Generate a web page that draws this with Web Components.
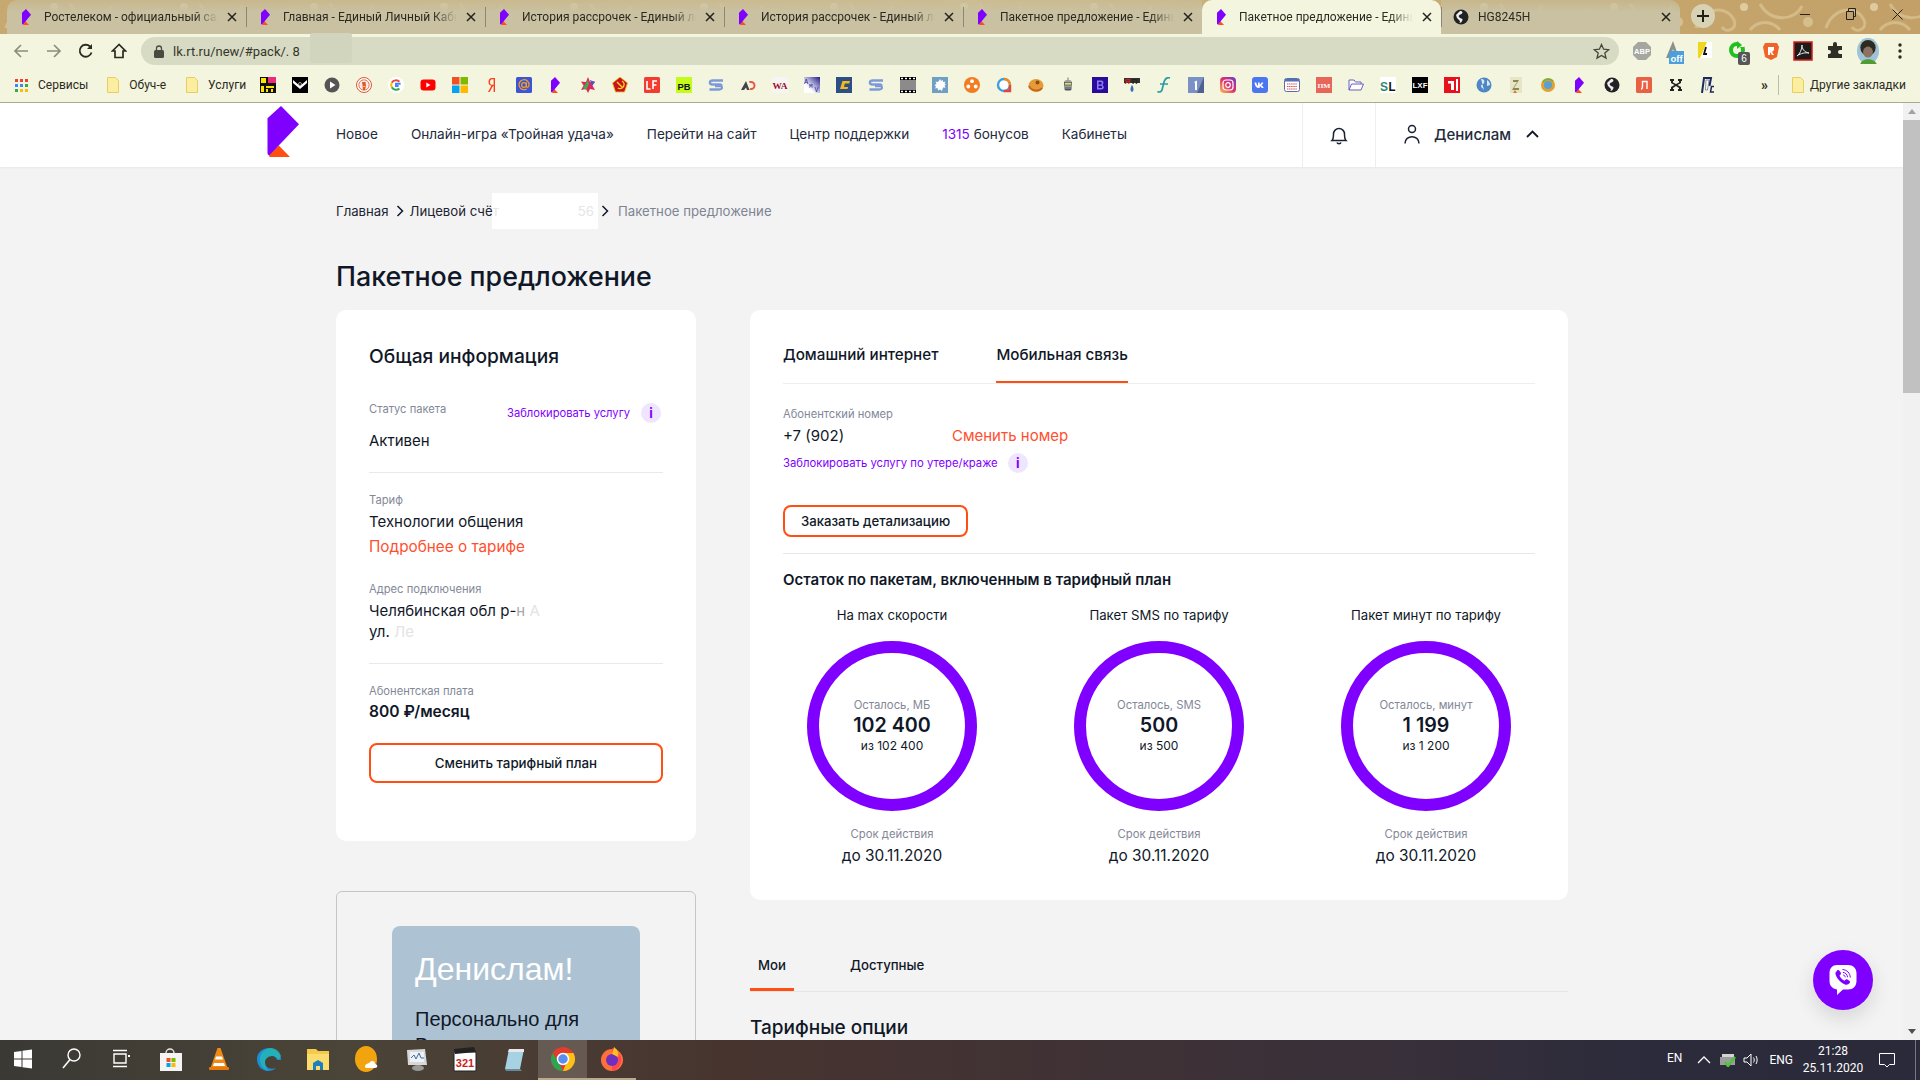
<!DOCTYPE html>
<html lang="ru">
<head>
<meta charset="utf-8">
<title>Пакетное предложение</title>
<style>
  html, body { margin: 0; height: 100%; overflow: hidden; }
  body { display: flex; flex-direction: column; width: 1920px; height: 1080px; background: #f3f3f3; color: #101828; font-family: Inter, "Liberation Sans", sans-serif; }
</style>
</head>
<body>
  <browser-tabs></browser-tabs>
  <browser-toolbar></browser-toolbar>
  <bookmark-bar></bookmark-bar>
  <page-viewport>
    <site-header></site-header>
    <bread-crumbs></bread-crumbs>
    <page-title>Пакетное предложение</page-title>
    <two-columns>
      <div slot="left">
        <general-card></general-card>
        <promo-box name="Денислам!">Персонально для<br>Вас</promo-box>
      </div>
      <div slot="right">
        <mobile-card></mobile-card>
        <options-section></options-section>
      </div>
    </two-columns>
  </page-viewport>
  <task-bar></task-bar>

<script>
const LOGO = `<polygon fill="#ff4f12" points="11.8,39.5 23,51 2.6,51 1.5,48"/><path fill="#7f00ff" d="M14 0 32 18.3 2.4 49.2C1 49 .5 48 .5 47V12.2Z"/>`;
const t = (x, y, size, fill, str, extra = '') => `<text x="${x}" y="${y}" font-size="${size}" fill="${fill}" font-family="Liberation Sans, sans-serif" font-weight="700" ${extra}>${str}</text>`;

const FAVICONS = {
  dfm: `<rect width="16" height="16" fill="#111"/><rect x="8" width="8" height="6" fill="#ee2a7b"/><path d="M1 1h5v5H1zM1 9h3v6H1zM6 9h8v2H6zM6 12h2v3H6zM11 12h2v3h-2z" fill="#ffe600"/>`,
  env: `<rect width="16" height="16" fill="#000"/><path d="M1 3l7 6 7-6v3L8 12 1 6z" fill="#fff"/><circle cx="8" cy="7" r="1.5" fill="#000" stroke="#fff" stroke-width=".6"/>`,
  play: `<circle cx="8" cy="8" r="7.5" fill="#555"/><path d="M6 4.5 11.5 8 6 11.5z" fill="#fff"/>`,
  duck: `<circle cx="8" cy="8" r="7.5" fill="#fff" stroke="#de5833" stroke-width="1"/><circle cx="8" cy="8" r="5.2" fill="#fbe9e4" stroke="#de5833" stroke-width=".8"/><path d="M6 5h3.5l.5 4-1 4H7L6.5 8z" fill="#de5833"/><path d="M7 9h3l-1 1H7z" fill="#fdd20a"/>`,
  google: `<circle cx="8" cy="8" r="8" fill="#fff"/><path d="M12.6 6.8H8v2.2h2.6" fill="none" stroke="#4285f4" stroke-width="2"/><path d="M11.4 4.7A5 5 0 0 0 3.8 5.6" fill="none" stroke="#ea4335" stroke-width="2"/><path d="M3.8 5.6a5 5 0 0 0 0 4.8" fill="none" stroke="#fbbc05" stroke-width="2"/><path d="M3.8 10.4a5 5 0 0 0 7.6 1" fill="none" stroke="#34a853" stroke-width="2"/>`,
  yt: `<rect y="2.5" width="15" height="11" rx="3" x=".5" fill="#f00"/><path d="M6.3 5.5 10.5 8l-4.2 2.5z" fill="#fff"/>`,
  ms: `<rect width="7.5" height="7.5" fill="#f25022"/><rect x="8.5" width="7.5" height="7.5" fill="#7fba00"/><rect y="8.5" width="7.5" height="7.5" fill="#00a4ef"/><rect x="8.5" y="8.5" width="7.5" height="7.5" fill="#ffb900"/>`,
  ya: `<path d="M11 1H8C5.5 1 4.5 3 4.5 5S5.5 8.4 7.4 8.8L4 15h1.6L9 9h.6v6H11zM9.6 2.2v5.6H8.3C6.9 7.8 6 7 6 5s.9-2.8 2.3-2.8z" fill="#fc3f1d"/>`,
  mail: `<rect width="16" height="16" rx="1.5" fill="#3c55d8"/><circle cx="8" cy="8" r="2.4" fill="none" stroke="#f7a11a" stroke-width="1.2"/><path d="M10.4 5.6v3.6c0 1.6 2.6 1.6 2.6-1.2A5 5 0 1 0 10.6 12" fill="none" stroke="#f7a11a" stroke-width="1.2"/>`,
  star: `<path d="M8 0l2 5 5-.5-2.6 4L15 13l-5-1-2 4-2-4-5 1 2.6-4.5L1 4.5 6 5z" fill="#e0245e"/><path d="M8 3l1 4-3 6-3-2z" fill="#35b34a"/><path d="M10 3l5 2-3 4z" fill="#5a4fcf"/>`,
  soviet: `<path d="M8 0l7.5 6-3 9h-9L.5 6z" fill="#c8131d" stroke="#e7c51c" stroke-width=".8"/><path d="M5 5l6 6M10 4a4 4 0 0 1-4 7" fill="none" stroke="#ffd920" stroke-width="1.4"/>`,
  lf: `<rect width="16" height="16" rx="1.5" fill="#f33c2f"/><path d="M3 4v8h3.5M9 12V4h4M9 8h3.4" fill="none" stroke="#fff" stroke-width="1.6"/>`,
  pb: `<rect width="16" height="16" fill="#c5fa1c"/>` + t(1.4, 12.5, 9.5, '#111', 'PB', 'textLength="13" lengthAdjust="spacingAndGlyphs"'),
  s: `<path d="M15 3.5H5C1 3.5 1 7 4 7.5h8c2 0 2 1.5 0 1.5H7M1.5 12.5H11c3.6 0 3.6-2.4 2-3.3" fill="none" stroke="#7d9ad8" stroke-width="2.3"/>`,
  ad: `<path d="M1 13 6 4l3.5 9H7L6 10.5 4 13z" fill="#444"/><path d="M9 4h2a4.5 4.5 0 0 1 0 9h-1.5l.8-2H11a2.5 2.5 0 0 0 0-5H9.6z" fill="#e8574a"/>`,
  wa: `<rect width="16" height="16" fill="#f7f4f4"/><text x=".4" y="11.5" font-size="8" fill="#9b0d18" font-family="Liberation Serif" font-weight="700" textLength="15" lengthAdjust="spacingAndGlyphs">WA</text>`,
  amv: `<defs><linearGradient id="amvg" x1="1" y1="0" x2="0" y2="1"><stop offset="0" stop-color="#221a8c"/><stop offset=".7" stop-color="#fff"/></linearGradient></defs><rect width="16" height="16" fill="url(#amvg)"/><text x="0" y="7" font-size="7" fill="#1a1a9c" font-family="Liberation Mono">A</text><text x="5" y="10.5" font-size="6" fill="#1a1a9c" font-family="Liberation Mono">M</text><text x="10.5" y="15" font-size="6.5" fill="#1a1a9c" font-family="Liberation Mono">V</text>`,
  c: `<rect width="16" height="16" fill="#2c4f86"/><path d="M14 4H6.5L4 12h7.5l.7-2H8l.8-3.6h4.4z" fill="#f7b81d"/>`,
  film: `<rect width="16" height="16" fill="#000"/><rect y="3" width="16" height="10" fill="#8b8b8b"/><path d="M1 .8h2v1.4H1zM5 .8h2v1.4H5zM9 .8h2v1.4H9zM13 .8h2v1.4h-2zM1 13.8h2v1.4H1zM5 13.8h2v1.4H5zM9 13.8h2v1.4H9zM13 13.8h2v1.4h-2z" fill="#fff"/>`,
  splash: `<rect width="16" height="16" fill="#6f9fc4"/><path d="M8 2l1 2 2-1 0 2 2.5-.3-1 2 1.500 1-1.500 1 1 2-2.500-.300L10 14l-2-1.500L6 13.500 5.500 11 3 11.500 4 9.500 2.500 8 4.500 7 3.500 4.500 6 5z" fill="#fff"/>`,
  reel: `<circle cx="8" cy="8" r="8" fill="#f47c20"/><circle cx="8" cy="4.2" r="1.9" fill="#fff"/><circle cx="4.3" cy="9.5" r="1.9" fill="#fff"/><circle cx="11.7" cy="9.5" r="1.9" fill="#fff"/>`,
  ring: `<circle cx="8" cy="8" r="6" fill="#fff" stroke="#3aa0dc" stroke-width="2.4"/><path d="M8 2a6 6 0 0 1 6 6" fill="none" stroke="#f48a1c" stroke-width="2.4"/><path d="M14 8v6H8" fill="none" stroke="#e8443a" stroke-width="2.4"/>`,
  donut: `<ellipse cx="8" cy="8.5" rx="7.5" ry="6.5" fill="#e79a38"/><circle cx="9.5" cy="5.5" r="2" fill="#8e4c10"/><path d="M1 9c2 5 10 6 13 2" fill="none" stroke="#c8661c" stroke-width="2"/>`,
  robot: `<rect x="4" y="3" width="8" height="11" rx="3" fill="#98a0a0"/><rect x="4.5" y="5.5" width="7" height="2.5" fill="#e8d77a" stroke="#333" stroke-width=".5"/><path d="M5 11h6M5 12.5h6" stroke="#333" stroke-width=".7"/><path d="M8 .5v2.500" stroke="#777"/>`,
  bs: `<rect width="16" height="16" fill="#2a0a9c"/><path d="M5 3.500h4.500c2.500 0 2.500 4 .5 4.500 2.500.5 2.500 4.500-.5 4.500H5zM6.500 5v2.400H9c1 0 1-2.400 0-2.400zM6.500 8.700v2.300H9.300c1.200 0 1.200-2.300 0-2.300z" fill="#8f7cf5" fill-rule="evenodd"/>`,
  yap: `<rect y="1" width="16" height="5" fill="#111" opacity=".85"/>` + t(.5, 7, 7.5, '#d81e1e', 'Я') + t(8, 7, 7.5, '#222', 'П') + `<path d="M8 8c2 3 2 6 0 7-2-1-2-4 0-7z" fill="#3a6fb0"/>`,
  f: `<path d="M14 1c-3-1-5 1-6 4L6 13c-.5 2-3 2.500-4.500 1.500M4 7h8" fill="none" stroke="#2b9ba0" stroke-width="1.700"/>`,
  one: `<rect width="16" height="16" fill="#7b90c4"/><path d="M16 0v16H9z" fill="#51618f"/><path d="M6 5l3-1.500V13H7V6z" fill="#fff"/>`,
  insta: `<defs><linearGradient id="ig" x1="0" y1="1" x2="1" y2="0"><stop offset="0" stop-color="#fdc14a"/><stop offset=".5" stop-color="#e1306c"/><stop offset="1" stop-color="#6a3cc9"/></linearGradient></defs><rect width="16" height="16" rx="4" fill="url(#ig)"/><rect x="3" y="3" width="10" height="10" rx="3" fill="none" stroke="#fff" stroke-width="1.200"/><circle cx="8" cy="8" r="2.300" fill="none" stroke="#fff" stroke-width="1.200"/>`,
  vk: `<rect width="16" height="16" rx="3" fill="#4c75f2"/><path d="M2.500 5.500h1.800c.3 2 1 3 1.700 3.200V5.500h1.700v1.900c.8-.2 1.500-1 1.900-1.900h1.700c-.3 1.300-1.200 2.300-1.900 2.800.8.400 1.800 1.200 2.200 2.700h-1.900c-.4-1-1.100-1.700-2-1.800V11H7C4.300 11 2.700 9 2.500 5.500z" fill="#fff"/>`,
  cal: `<rect x=".5" y="1.500" width="15" height="13" rx="2" fill="#fff" stroke="#5470b0"/><rect x="1" y="2" width="14" height="2.500" fill="#5470b0"/><path d="M3 7h10M3 9.500h10M3 12h10" stroke="#d44" stroke-width="1.200" stroke-dasharray="1.400 .7"/>`,
  pm: `<rect width="16" height="16" fill="#e8655a"/><text x="1.500" y="11" font-size="7" fill="#fff" font-family="Liberation Serif" font-weight="700" textLength="13" lengthAdjust="spacingAndGlyphs">ПМ</text>`,
  folder: `<path d="M1 13V3h5l1.500 2H13v2M1 13l2.500-6H15.500l-2.500 6z" fill="#fff" stroke="#6a60c0" stroke-width="1"/>`,
  sl: `<rect width="16" height="16" fill="#fff"/>` + t(0, 14, 13, '#2c8a70', 'S', 'textLength="8" lengthAdjust="spacingAndGlyphs"') + t(8.5, 14, 13, '#111', 'L', 'textLength="7" lengthAdjust="spacingAndGlyphs"'),
  lxf: `<rect width="16" height="16" fill="#000"/>` + t(.5, 11, 7, '#fff', 'LXF', 'textLength="15" lengthAdjust="spacingAndGlyphs"'),
  red1: `<rect width="16" height="16" fill="#e8101a"/><path d="M4 4h6v9H7V6.500H4z" fill="#fff"/><rect x="12" y="2" width="2" height="12" fill="#fff"/>`,
  globe: `<circle cx="8" cy="8" r="7.500" fill="#4f86c6"/><path d="M5 2c3 0 4 2 3 4S5 7 5 9s2 2 3 4M11 3c2 1 3 3 3 5l-3 1z" fill="#dbe8f5"/>`,
  z: `<rect x="2" width="12" height="16" fill="#e8e4c8"/><path d="M5 3h6l-5 8h5v2H4l5-8H5z" fill="#8a8a4a"/><path d="M7 13l2 3H5z" fill="#d87a2a"/>`,
  ff: `<circle cx="8" cy="8" r="7" fill="#dfa230"/><circle cx="8" cy="8" r="4" fill="#5a9fd4"/><path d="M3 5c2-3 7-4 10-1" fill="none" stroke="#6ab04c" stroke-width="1.500"/>`,
  rost: `<path fill="#ff4f12" d="M6.200 12 10 16H4z"/><path fill="#7f00ff" d="M7 0l5 5.700L4 15.400 3 15V3.800z"/>`,
  bglobe: `<circle cx="8" cy="8" r="7.500" fill="#222"/><path d="M7 2c3 0 3 2 1.500 3S5 6 6 8s4 1 3.500 3-2 3-3 3l.5-2-3-3-1-3z" fill="#eee"/>`,
  el: `<rect width="16" height="16" rx="1.500" fill="#ea6044"/><path d="M5 12c1.500 0 1.500-1 1.500-3V4.500h4.500V12" fill="none" stroke="#fff" stroke-width="1.400"/>`,
  x: `<path d="M2 2h4v2H5v1.500L8 7l3-1.500V4h-1V2h4v2h-1v2L9.500 8 13 10v2h1v2h-4v-2h1v-1L8 9l-3 2v1h1v2H2v-2h1v-2l3.500-2L3 6V4H2z" fill="#222"/>`,
  ps: `<path d="M2 16 4 1h7L9.500 9" fill="none" stroke="#1c2b5c" stroke-width="2"/><path d="M14 9.500h-2.500L10.500 15H14" fill="none" stroke="#1c2b5c" stroke-width="1.500"/><path d="M6 3h3L7.500 13H5.500z" fill="#fff" stroke="#1c2b5c" stroke-width=".5"/>`
};

class FavIcon extends HTMLElement {
  constructor() {
    super();
    this.attachShadow({ mode: 'open' });
  }

  connectedCallback() {
    const kind = this.getAttribute('kind');
    this.shadowRoot.innerHTML = `
      <style>:host { display: block; width: 16px; height: 16px; flex: none; } svg { display: block; }</style>
      <svg viewBox="0 0 16 16" width="16" height="16">${FAVICONS[kind] || ''}</svg>`;
  }
}

class BrowserTab extends HTMLElement {
  constructor() {
    super();
    this.attachShadow({ mode: 'open' });
  }

  connectedCallback() {
    const kind = this.getAttribute('kind') || 'rost';
    this.shadowRoot.innerHTML = `
      <style>
        :host { display: flex; align-items: center; box-sizing: border-box; width: 239px; height: 34px; padding: 0 9px 0 0; flex: none;
          background: linear-gradient(rgba(201,193,161,.55), #c9c1a1 12px); color: #2c2a20; font: 12px Roboto, sans-serif; }
        :host([active]) { background: #f4f5df; border-radius: 10px 10px 0 0; color: #2b2b22; }
        :host([last]) { border-radius: 0 10px 0 0; }
        :host([first]) { border-radius: 10px 0 0 0; }
        .sep { width: 1px; height: 20px; background: #8c8672; margin-right: 11px; flex: none; }
        :host([active]) .sep, :host([first]) .sep { background: transparent; }
        .title { flex: 1; margin: 0 9px 0 9px; white-space: nowrap; overflow: hidden; -webkit-mask-image: linear-gradient(to right, #000 86%, transparent); mask-image: linear-gradient(to right, #000 86%, transparent); }
        svg { flex: none; }
      </style>
      <span class="sep"></span>
      <fav-icon kind="${kind}"></fav-icon>
      <span class="title"><slot></slot></span>
      <svg width="10" height="10" viewBox="0 0 10 10"><path d="M1 1l8 8M9 1L1 9" stroke="#22211a" stroke-width="1.500"/></svg>`;
  }
}

class BrowserTabs extends HTMLElement {
  constructor() {
    super();
    this.attachShadow({ mode: 'open' });
  }

  connectedCallback() {
    this.shadowRoot.innerHTML = `
      <style>
        :host { display: flex; height: 34px; flex: none; position: relative; background: linear-gradient(90deg, #c6a870, #d0b57e 50%, #c2a067); overflow: hidden; }
        .art { position: absolute; left: 0; top: 0; }
        .row { position: relative; display: flex; padding-left: 7px; width: 100%; align-items: flex-start; }
        .new { width: 24px; height: 24px; border-radius: 50%; background: #d8d2b4; margin: 4px 0 0 11px; display: flex; align-items: center; justify-content: center; flex: none; }
        .win { margin-left: auto; display: flex; }
        .win span { width: 46px; height: 28px; display: flex; justify-content: center; align-items: center; }
      </style>
      <svg class="art" width="1920" height="34">
        <defs><pattern id="p" width="130" height="34" patternUnits="userSpaceOnUse">
          <g fill="none" stroke="#e6d9aa" stroke-width="3" opacity=".45">
            <path d="M6 28c6-20 30-24 38-8 4 9-8 14-12 7"/><path d="M70 4c10 18 34 18 42 2"/><path d="M60 30c8-10 22-10 30 0"/>
          </g>
          <circle cx="54" cy="7" r="4" fill="#efe6c2" opacity=".6"/><circle cx="118" cy="22" r="5" fill="#e8dcae" opacity=".5"/>
        </pattern></defs>
        <rect width="1920" height="34" fill="url(#p)"/>
      </svg>
      <div class="row">
        <browser-tab first>Ростелеком - официальный сайт</browser-tab>
        <browser-tab>Главная - Единый Личный Кабинет</browser-tab>
        <browser-tab>История рассрочек - Единый личный</browser-tab>
        <browser-tab>История рассрочек - Единый личный</browser-tab>
        <browser-tab>Пакетное предложение - Единый</browser-tab>
        <browser-tab active>Пакетное предложение - Единый</browser-tab>
        <browser-tab last kind="bglobe">HG8245H</browser-tab>
        <span class="new"><svg width="12" height="12" viewBox="0 0 12 12"><path d="M6 0v12M0 6h12" stroke="#1f1e18" stroke-width="2"/></svg></span>
        <span class="win">
          <span><svg width="10" height="10"><path d="M0 5.500h10" stroke="#222"/></svg></span>
          <span><svg width="10" height="12"><path d="M.5 3.500h7v8h-7zM2.500 3.500v-3h7v8h-2" fill="none" stroke="#222"/></svg></span>
          <span><svg width="11" height="11"><path d="M.5.500l10 10M10.500.500l-10 10" stroke="#222"/></svg></span>
        </span>
      </div>`;
  }
}

class BrowserToolbar extends HTMLElement {
  constructor() {
    super();
    this.attachShadow({ mode: 'open' });
  }

  connectedCallback() {
    this.shadowRoot.innerHTML = `
      <style>
        :host { display: flex; align-items: center; height: 34px; flex: none; background: #f4f5df; position: relative; }
        .nav { display: flex; width: 128px; padding-left: 13px; gap: 16.5px; flex: none; }
        .nav svg { display: block; }
        .omni { width: 1478px; height: 28px; border-radius: 14px; background: #d8dbc3; display: flex; align-items: center; padding-left: 13px; box-sizing: border-box; font: 13px Roboto, sans-serif; color: #35362a; position: relative; flex: none; }
        .omni span { margin-left: 9px; }
        .star { margin-left: auto; margin-right: 9px; }
        .smudge { position: absolute; left: 169px; top: -4px; width: 42px; height: 30px; background: #d2d5bd; border-radius: 3px; }
        .ext { display: flex; align-items: center; margin-left: 13px; gap: 12px; }
        .e { width: 20px; height: 20px; flex: none; display: block; }
      </style>
      <div class="nav">
        <svg width="16" height="16" viewBox="0 0 16 16"><path d="M15 8H2M8 2 2 8l6 6" fill="none" stroke="#8b8d7d" stroke-width="1.700"/></svg>
        <svg width="16" height="16" viewBox="0 0 16 16"><path d="M1 8h13M8 2l6 6-6 6" fill="none" stroke="#8b8d7d" stroke-width="1.700"/></svg>
        <svg width="16" height="16" viewBox="0 0 16 16"><path d="M13.500 9.500A6 6 0 1 1 12 3.500" fill="none" stroke="#2a2a22" stroke-width="1.800"/><path d="M14 1v5H9z" fill="#2a2a22"/></svg>
        <svg width="16" height="16" viewBox="0 0 16 16"><path d="M8 1.500 1.500 8H4v6.500h8V8h2.500z" fill="none" stroke="#2a2a22" stroke-width="1.700"/></svg>
      </div>
      <div class="omni">
        <svg width="10" height="13" viewBox="0 0 10 13"><path d="M2.500 6V3.500a2.500 2.500 0 0 1 5 0V6" fill="none" stroke="#4a4b3e" stroke-width="1.300"/><rect y="5" width="10" height="8" rx="1.500" fill="#4a4b3e"/></svg>
        <span>lk.rt.ru/new/#pack/. 8</span>
        <i class="smudge"></i>
        <svg class="star" width="17" height="17" viewBox="0 0 17 17"><path d="M8.500 1.500l2.100 4.700 5.100.5-3.900 3.400 1.200 5-4.500-2.700L4 15.100l1.200-5L1.300 6.700l5.100-.5z" fill="none" stroke="#45463a" stroke-width="1.300"/></svg>
      </div>
      <div class="ext">
        <svg class="e" viewBox="0 0 20 20"><path d="M6 1h8l5 5v8l-5 5H6l-5-5V6z" fill="#a5a6a0"/><text x="10" y="13" font-size="7.500" fill="#fff" font-family="Liberation Sans" font-weight="700" text-anchor="middle">ABP</text></svg>
        <svg class="e" viewBox="0 0 20 20" style="overflow:visible"><path d="M9 0 2 17h13z" fill="#8e8f87"/><path d="M9 8l-3 9h6z" fill="#f4f5df"/><rect x="5" y="10" width="15" height="13" fill="#4d9fdc"/><text x="12.500" y="20.500" font-size="9.500" fill="#fff" font-family="Liberation Sans" font-weight="700" text-anchor="middle">off</text></svg>
        <svg class="e" viewBox="0 0 20 20" style="margin-left:-1px"><path d="M3 1h14v16H3z" fill="#fff"/><path d="M3 1h9L5 17H3z" fill="#f2d51d"/><path d="M11 6 9 13h3" fill="none" stroke="#111" stroke-width="1.800"/></svg>
        <svg class="e" viewBox="0 0 20 20" style="overflow:visible;margin-left:2px"><circle cx="8" cy="9" r="6" fill="none" stroke="#1fc01f" stroke-width="4"/><path d="M8 0v6h7V0z" fill="#f4f5df"/><path d="M8 0l5 4-5 4z" fill="#1fc01f"/><rect x="9" y="11" width="12" height="13" rx="2" fill="#555"/><text x="15" y="21" font-size="10" fill="#fff" font-family="Liberation Sans" text-anchor="middle">6</text></svg>
        <svg class="e" viewBox="0 0 20 20"><path d="M4 2h12l2 4-2 10-6 3-6-3-2-10z" fill="#f0642a"/><path d="M7 6h6v3l-2 2 2 3H11L9 11v3H7z" fill="#fff"/></svg>
        <svg class="e" viewBox="0 0 20 20"><rect x="1" y="1" width="18" height="18" fill="#1c1c1c" stroke="#d91a1a" stroke-width="1.500"/><path d="M4 15c3-2 5-7 5-11 0 4 2 7 7 8-4-.5-8 0-12 3z" fill="none" stroke="#e8e8e8" stroke-width="1"/></svg>
        <svg class="e" viewBox="0 0 20 20"><path d="M8 3a2 2 0 0 1 4 0v2h5v4h-2a2 2 0 0 0 0 4h2v4H3v-4h1a2 2 0 0 0 0-4H3V5h5z" fill="#2f2f27"/></svg>
        <svg class="e" viewBox="0 0 20 20" style="width:22px;height:26px"><ellipse cx="10" cy="10" rx="10" ry="12" fill="#9fc4d8"/><ellipse cx="10" cy="7" rx="7" ry="7" fill="#2d2a20"/><ellipse cx="10" cy="11" rx="4.500" ry="5" fill="#8c7260"/><path d="M3 22c1-6 13-6 15 0z" fill="#4f9c35"/></svg>
        <svg width="4" height="16" viewBox="0 0 4 16" style="margin-left:7px"><circle cx="2" cy="2" r="1.700" fill="#2a2a22"/><circle cx="2" cy="8" r="1.700" fill="#2a2a22"/><circle cx="2" cy="14" r="1.700" fill="#2a2a22"/></svg>
      </div>`;
  }
}

class BookmarkBar extends HTMLElement {
  constructor() {
    super();
    this.attachShadow({ mode: 'open' });
  }

  connectedCallback() {
    const kinds = 'dfm env play duck google yt ms ya mail rost star soviet lf pb s ad wa amv c s film splash reel ring donut robot bs yap f one insta vk cal pm folder sl lxf red1 globe z ff rost bglobe el x ps'.split(' ');
    const yellowFolder = `<svg width="12" height="16" viewBox="0 0 12 16"><path d="M.5.500h8l3 3v12H.5z" fill="#fbeea0" stroke="#e8ce62"/></svg>`;
    this.shadowRoot.innerHTML = `
      <style>
        :host { display: flex; align-items: center; height: 35px; flex: none; box-sizing: border-box; padding: 0 14px 0 15px; background: #f4f5df; border-bottom: 1px solid #a9aa93; font: 12px Roboto, sans-serif; color: #2b2b22; white-space: nowrap; }
        .grid { display: grid; grid-template-columns: repeat(3, 3px); gap: 2px; margin-right: 10px; }
        .grid i { width: 3px; height: 3px; }
        .mark { display: flex; align-items: center; gap: 10px; margin-right: 20px; }
        .icons { display: flex; gap: 16px; margin-left: -6px; }
        .more { margin-left: auto; font-weight: 700; font-size: 14px; }
        .sep { width: 1px; height: 20px; background: #bdbea6; margin: 0 13px 0 10px; }
      </style>
      <span class="grid">
        <i style="background:#ea4335"></i><i style="background:#ea4335"></i><i style="background:#ea4335"></i>
        <i style="background:#4285f4"></i><i style="background:#4285f4"></i><i style="background:#34a853"></i>
        <i style="background:#34a853"></i><i style="background:#fbbc05"></i><i style="background:#fbbc05"></i>
      </span>
      <span class="mark" style="margin-right:19px">Сервисы</span>
      <span class="mark">${yellowFolder}Обуч-е</span>
      <span class="mark">${yellowFolder}Услуги</span>
      <span class="icons">${kinds.map((k) => `<fav-icon kind="${k}"></fav-icon>`).join('')}</span>
      <span class="more">»</span>
      <span class="sep"></span>
      <span class="mark" style="margin:0;gap:6px">${yellowFolder}Другие закладки</span>`;
  }
}

class PageViewport extends HTMLElement {
  constructor() {
    super();
    this.attachShadow({ mode: 'open' });
  }

  connectedCallback() {
    this.shadowRoot.innerHTML = `
      <style>
        :host { display: flex; flex: 1; min-height: 0; background: #f3f3f3; position: relative; }
        .content { flex: 1; min-width: 0; overflow: hidden; }
        .bar { width: 17px; flex: none; background: #f1f1f1; display: flex; flex-direction: column; align-items: center; }
        .up, .down { width: 0; height: 0; border: 4px solid transparent; }
        .up { border-bottom: 5px solid #a3a3a3; border-top: 0; margin: 6px 0 6px; }
        .thumb { width: 17px; height: 273px; background: #c1c1c1; }
        .down { border-top: 5px solid #505050; border-bottom: 0; margin-top: auto; margin-bottom: 6px; }
        .viber { position: absolute; left: 1813px; top: 847px; width: 60px; height: 60px; border-radius: 50%; background: #7f00ff; box-shadow: 0 8px 20px rgba(0,0,0,.12); }
        .viber svg { display: block; }
      </style>
      <div class="content"><slot></slot></div>
      <div class="bar"><i class="up"></i><i class="thumb"></i><i class="down"></i></div>
      <div class="viber">
        <svg width="60" height="60" viewBox="0 0 60 60">
          <path d="M24 15h11c5 0 8.500 3 8.500 8.500v7.500c0 5-3.500 8.500-8.500 8.500h-5l-6 5.500v-5.500c-5-1-7.500-4-7.500-8.500v-7.500C16.500 18 19.500 15 24 15z" fill="#fff"/>
          <path d="M24 20.500c1-.8 2-.5 2.600.4l1.100 1.700c.5.800.3 1.700-.5 2.300l-.7.600c.6 2 2.700 4.300 5 5.200l.7-.8c.6-.7 1.500-.8 2.300-.3l1.800 1.200c.9.700 1 1.700.2 2.500-1.400 1.500-3 1.800-5 .9-4-1.800-7.500-5.500-8.800-9.500-.5-1.700-.2-3 1.300-3.800z" fill="#7f00ff"/>
          <path d="M29.500 19.500c4.500.4 7.500 3.500 7.800 8M29.800 22.300c2.800.3 4.500 2.200 4.800 5M30.200 25c1.300.2 1.900 1 2 2.300" fill="none" stroke="#7f00ff" stroke-width="1"/>
        </svg>
      </div>`;
  }
}

class SiteHeader extends HTMLElement {
  constructor() {
    super();
    this.attachShadow({ mode: 'open' });
  }

  connectedCallback() {
    this.shadowRoot.innerHTML = `
      <style>
        :host { display: flex; height: 64px; background: #fff; box-shadow: 0 1px 2px rgba(0,0,0,.05); font-size: 13.55px; color: #232b3c; position: relative; }
        .logo { margin: 3px 37px 0 267px; flex: none; display: block; }
        nav { display: flex; align-items: center; gap: 33px; white-space: nowrap; padding-bottom: 2px; }
        b { font-weight: 400; color: #7f00ff; }
        .side { margin-left: auto; display: flex; height: 100%; }
        .bell { width: 72px; border-left: 1px solid #eeeeee; border-right: 1px solid #eeeeee; display: flex; align-items: center; justify-content: center; }
        .user { width: 527px; box-sizing: border-box; padding: 0 0 2px 27px; display: flex; align-items: center; gap: 13px; font-size: 15px; font-weight: 500; }
        .user svg:last-child { margin-left: 2px; }
      </style>
      <svg class="logo" width="32" height="52" viewBox="0 0 32 52">${LOGO}</svg>
      <nav>
        <span>Новое</span>
        <span>Онлайн-игра «Тройная удача»</span>
        <span>Перейти на сайт</span>
        <span>Центр поддержки</span>
        <span><b>1315</b> бонусов</span>
        <span>Кабинеты</span>
      </nav>
      <div class="side">
        <div class="bell">
          <svg width="18" height="20" viewBox="0 0 18 20"><path d="M2 15.500c1.500-1.500 1.500-3 1.500-6.500a5.500 5.500 0 0 1 11 0c0 3.500 0 5 1.500 6.500zM7 17.500c.5 1.500 3.500 1.500 4 0" fill="none" stroke="#1a2233" stroke-width="1.500"/></svg>
        </div>
        <div class="user">
          <svg width="18" height="20" viewBox="0 0 18 20"><circle cx="9" cy="5" r="3.500" fill="none" stroke="#1a2233" stroke-width="1.500"/><path d="M2 19.500c0-9 14-9 14 0" fill="none" stroke="#1a2233" stroke-width="1.500"/></svg>
          <span>Денислам</span>
          <svg width="13" height="8" viewBox="0 0 13 8"><path d="M1 7l5.500-5.500L12 7" fill="none" stroke="#101828" stroke-width="1.800"/></svg>
        </div>
      </div>`;
  }
}

class BreadCrumbs extends HTMLElement {
  constructor() {
    super();
    this.attachShadow({ mode: 'open' });
  }

  connectedCallback() {
    const chevron = `<svg width="8" height="12" viewBox="0 0 8 12"><path d="M1.500 1 6.500 6l-5 5" fill="none" stroke="#101828" stroke-width="1.500"/></svg>`;
    this.shadowRoot.innerHTML = `
      <style>
        :host { display: flex; align-items: center; height: 20px; margin: 34px 0 37px 336px; font-size: 13.2px; color: #1d2433; position: relative; white-space: nowrap; }
        svg { margin: 0 6px 0 7px; flex: none; position: relative; }
        .faint { color: #e6e6e6; }
        .id { position: relative; }
        .num { position: relative; margin-left: 79px; }
        .last { color: #7d8594; margin-left: 3px; }
        .patch { position: absolute; left: 156px; top: -8px; width: 106px; height: 36px; background: #fff; }
      </style>
      <span>Главная</span>${chevron}
      <i class="patch"></i>
      <span class="id">Лицевой счё<span class="faint">т</span></span>
      <span class="num faint">56</span>${chevron}
      <span class="last">Пакетное предложение</span>`;
  }
}

class PageTitle extends HTMLElement {
  constructor() {
    super();
    this.attachShadow({ mode: 'open' });
  }

  connectedCallback() {
    this.shadowRoot.innerHTML = `
      <style>:host { display: block; margin: 0 0 16px 336px; font-size: 26.8px; line-height: 36px; font-weight: 500; color: #101828; white-space: nowrap; }</style>
      <slot></slot>`;
  }
}

class TwoColumns extends HTMLElement {
  constructor() {
    super();
    this.attachShadow({ mode: 'open' });
  }

  connectedCallback() {
    this.shadowRoot.innerHTML = `
      <style>:host { display: grid; grid-template-columns: 360px 818px; column-gap: 54px; margin-left: 336px; align-items: start; }</style>
      <slot name="left"></slot><slot name="right"></slot>`;
  }
}

class InfoDot extends HTMLElement {
  constructor() {
    super();
    this.attachShadow({ mode: 'open' });
  }

  connectedCallback() {
    this.shadowRoot.innerHTML = `
      <style>
        :host { display: inline-flex; align-items: center; justify-content: center; width: 20px; height: 20px; border-radius: 50%; background: #efe5ff; color: #7f00ff; font: 700 13px Inter, sans-serif; flex: none; }
      </style>i`;
  }
}

class RtButton extends HTMLElement {
  constructor() {
    super();
    this.attachShadow({ mode: 'open' });
  }

  connectedCallback() {
    this.shadowRoot.innerHTML = `
      <style>
        :host { display: flex; align-items: center; justify-content: center; box-sizing: border-box; height: 40px; border: 2px solid #ff4f12; border-radius: 8px; background: #fff; font-size: 13.3px; font-weight: 500; color: #101828; white-space: nowrap; }
      </style>
      <slot></slot>`;
  }
}

class GeneralCard extends HTMLElement {
  constructor() {
    super();
    this.attachShadow({ mode: 'open' });
  }

  connectedCallback() {
    this.shadowRoot.innerHTML = `
      <style>
        :host { display: block; box-sizing: border-box; height: 531px; padding: 34px 33px 0; background: #fff; border-radius: 10px; }
        h2 { margin: 0 0 33px; font-size: 19.2px; line-height: 24px; font-weight: 500; }
        .label { font-size: 11.2px; line-height: 16px; color: #838897; }
        .value { font-size: 15px; line-height: 22px; }
        .status { display: flex; justify-content: space-between; align-items: flex-start; height: 16px; }
        .block { display: flex; align-items: center; font-size: 11.2px; line-height: 16px; color: #7f00ff; gap: 11px; margin: 2px 2px 0 0; }
        hr { border: 0; height: 1px; background: #e8e8ee; margin: 0; }
        .link { color: #ff4f2e; font-size: 15.3px; }
        .faint { color: #e4e4e4; }
        .grey { color: #a8a8a8; }
        .fee { font-weight: 600; font-size: 15.6px; }
      </style>
      <h2>Общая информация</h2>
      <div class="status">
        <span class="label">Статус пакета</span>
        <span class="block">Заблокировать услугу <info-dot></info-dot></span>
      </div>
      <div class="value" style="margin:13px 0 20px">Активен</div>
      <hr>
      <div class="label" style="margin-top:19px">Тариф</div>
      <div class="value" style="margin-top:3px">Технологии общения</div>
      <div class="value link" style="margin-top:3px">Подробнее о тарифе</div>
      <div class="label" style="margin-top:23px">Адрес подключения</div>
      <div class="value" style="margin:3px 0 21px;line-height:21px">Челябинская обл р-<span class="grey">н</span> <span class="faint">А</span><br>ул. <span class="faint">Ле</span></div>
      <hr>
      <div class="label" style="margin-top:19px">Абонентская плата</div>
      <div class="value fee" style="margin-top:2px">800 ₽/месяц</div>
      <rt-button style="margin-top:20px">Сменить тарифный план</rt-button>`;
  }
}

class PackRing extends HTMLElement {
  constructor() {
    super();
    this.attachShadow({ mode: 'open' });
  }

  connectedCallback() {
    const a = (n) => this.getAttribute(n);
    this.shadowRoot.innerHTML = `
      <style>
        :host { display: flex; flex-direction: column; align-items: center; text-align: center; white-space: nowrap; }
        .title { font-size: 13.2px; line-height: 20px; margin-bottom: 16px; }
        .ring { width: 170px; height: 170px; box-sizing: border-box; border: 12.5px solid #8000ff; border-radius: 50%; display: flex; flex-direction: column; align-items: center; padding-top: 44px; }
        .small { font-size: 11.3px; line-height: 16px; color: #838897; }
        .num { font-size: 19.7px; line-height: 24px; font-weight: 600; }
        .of { font-size: 12px; line-height: 16px; margin-top: 1px; }
        .date { font-size: 15.4px; line-height: 22px; margin-top: 3px; }
      </style>
      <div class="title">${a('title')}</div>
      <div class="ring">
        <span class="small">${a('unit')}</span>
        <span class="num">${a('left')}</span>
        <span class="of">из ${a('total')}</span>
      </div>
      <div class="small" style="margin-top:15px">Срок действия</div>
      <div class="date">до ${a('until')}</div>`;
  }
}

class MobileCard extends HTMLElement {
  constructor() {
    super();
    this.attachShadow({ mode: 'open' });
  }

  connectedCallback() {
    this.shadowRoot.innerHTML = `
      <style>
        :host { display: block; box-sizing: border-box; height: 590px; padding: 34px 33px 0; background: #fff; border-radius: 10px; }
        .tabs { display: flex; gap: 58px; border-bottom: 1px solid #eeeeee; font-size: 15.2px; font-weight: 500; line-height: 22px; height: 39px; }
        .tabs span { height: 37px; }
        .tabs .on { height: 37px; border-bottom: 2px solid #ff4f12; }
        .label { font-size: 11.2px; line-height: 16px; color: #838897; margin-top: 22px; }
        .phone { display: flex; font-size: 15px; line-height: 22px; margin-top: 3px; }
        .phone .num { width: 169px; flex: none; }
        .phone .change { color: #ff4f2e; }
        .block { display: flex; align-items: center; font-size: 11.3px; line-height: 16px; color: #7f00ff; gap: 10px; margin-top: 6px; }
        rt-button { width: 185px; height: 32px; margin-top: 32px; font-size: 13.2px; }
        hr { border: 0; height: 1px; background: #e8e8e8; margin: 16px 0 15px; }
        h3 { margin: 0; font-size: 15px; line-height: 22px; font-weight: 600; }
        .rings { display: grid; grid-template-columns: repeat(3, 218px); column-gap: 49px; margin-top: 14px; }
      </style>
      <div class="tabs"><span>Домашний интернет</span><span class="on">Мобильная связь</span></div>
      <div class="label">Абонентский номер</div>
      <div class="phone"><span class="num">+7 (902)</span><span class="change">Сменить номер</span></div>
      <div class="block">Заблокировать услугу по утере/краже <info-dot></info-dot></div>
      <rt-button>Заказать детализацию</rt-button>
      <hr>
      <h3>Остаток по пакетам, включенным в тарифный план</h3>
      <div class="rings">
        <pack-ring title="На max скорости" unit="Осталось, МБ" left="102 400" total="102 400" until="30.11.2020"></pack-ring>
        <pack-ring title="Пакет SMS по тарифу" unit="Осталось, SMS" left="500" total="500" until="30.11.2020"></pack-ring>
        <pack-ring title="Пакет минут по тарифу" unit="Осталось, минут" left="1 199" total="1 200" until="30.11.2020"></pack-ring>
      </div>`;
  }
}

class OptionsSection extends HTMLElement {
  constructor() {
    super();
    this.attachShadow({ mode: 'open' });
  }

  connectedCallback() {
    this.shadowRoot.innerHTML = `
      <style>
        :host { display: block; margin-top: 55px; }
        .tabs { display: flex; border-bottom: 1px solid #e6e6e6; font-size: 13.2px; font-weight: 500; line-height: 20px; height: 36px; }
        .tabs span { padding: 0 8px; }
        .tabs .on { border-bottom: 3px solid #ff4f12; margin-right: 56px; height: 33px; width: 28px; }
        .tabs span:last-child { padding: 0; }
        h2 { margin: 22px 0 0; font-size: 19px; line-height: 28px; font-weight: 500; }
      </style>
      <div class="tabs"><span class="on">Мои</span><span>Доступные</span></div>
      <h2>Тарифные опции</h2>`;
  }
}

class PromoBox extends HTMLElement {
  constructor() {
    super();
    this.attachShadow({ mode: 'open' });
  }

  connectedCallback() {
    this.shadowRoot.innerHTML = `
      <style>
        :host { display: block; box-sizing: border-box; margin-top: 50px; padding: 34px 55px 40px; border: 1px solid #c6c6c6; border-radius: 6px; font-family: "Liberation Sans", sans-serif; }
        .in { background: #adc3d4; border-radius: 8px; padding: 23px; height: 300px; box-sizing: border-box; }
        .name { font-size: 32px; line-height: 40px; color: #fff; }
        .text { margin-top: 17px; font-size: 20px; line-height: 26px; color: #101828; white-space: nowrap; }
      </style>
      <div class="in">
        <div class="name">${this.getAttribute('name')}</div>
        <div class="text"><slot></slot></div>
      </div>`;
  }
}

class TaskBar extends HTMLElement {
  constructor() {
    super();
    this.attachShadow({ mode: 'open' });
  }

  connectedCallback() {
    const icons = [
      `<path d="M2 5l7.500-1v7.500H2zM10.500 3.800 20 2.500v9h-9.500zM2 12.500h7.500V20L2 19zM10.500 12.500H20v9l-9.500-1.300z" fill="#fff"/>`,
      `<circle cx="13" cy="8" r="6" fill="none" stroke="#fff" stroke-width="1.400"/><path d="M9 12.500 2 21" stroke="#fff" stroke-width="1.600"/>`,
      `<path d="M4 7h12v9H4zM3 3.500h14M3 19.500h14" fill="none" stroke="#fff" stroke-width="1.400"/><path d="M18 8h2v2h-2z" fill="#fff"/>`,
      `<path d="M7 6a4 4 0 0 1 8 0" fill="none" stroke="#e8e8e8" stroke-width="1.400"/><rect x="1" y="6" width="22" height="18" fill="#f4f4f4"/><path d="M7.500 11h4v4h-4z" fill="#f25022"/><path d="M12.500 11h4v4h-4z" fill="#7fba00"/><path d="M7.500 16h4v4h-4z" fill="#00a4ef"/><path d="M12.500 16h4v4h-4z" fill="#ffb900"/>`,
      `<path d="M9.500 1h3l7 20h-17z" fill="#f08a12"/><path d="M8 9.500h6l1 3H7zM6 16h10l1 3H5z" fill="#fff"/><rect x="1" y="20" width="20" height="3" rx="1" fill="#e8780c"/>`,
      `<path d="M12 1C5 1 0 6 0 12c0 7 5 12 11 12 3 0 6-1 8-3-7 2-11-1-11-6 0-3 3-6 7-6 3 0 5 2 5 4h4C24 6 19 1 12 1z" fill="#1b8fd6"/><path d="M8 15c0-3 3-6 7-6 3 0 5 2 5 3 2 0 4-1 4-3C23 5 19 1 14 1 8 1 3 6 3 12c0 5 3 10 8 12-2-3-3-6-3-9z" fill="#2ac6a8" opacity=".6"/>`,
      `<path d="M1 2h9l2 2h11v19H1z" fill="#f5c94a"/><path d="M1 7h22v16H1z" fill="#fbdc6e"/><path d="M7 16l5-3 5 3v7h-3v-4h-4v4H7z" fill="#1b7fc0"/>`,
      `<ellipse cx="11" cy="12" rx="11" ry="13" fill="#f2a40e"/><path d="M10 20c0-4 4-3 5-5 2-2 5-1 5 2 3 0 3 4 0 4H12c-2 0-2-1-2-1z" fill="#fff"/>`,
      `<path d="M3 3l18-1 2 16H4z" fill="#d8d8d8"/><rect x="6" y="5" width="14" height="10" fill="#eef2f6"/><path d="M7 11l3-3 2 4 3-6 2 5h3" fill="none" stroke="#3a6ea5"/><ellipse cx="14" cy="21" rx="6" ry="3" fill="#9a9a9a"/>`,
      `<rect x="1" y="5" width="22" height="19" rx="1" fill="#fff" stroke="#222"/><path d="M1 2l20-2 2 5-21 2z" fill="#222"/><text x="12" y="20" font-size="11" font-weight="700" font-family="Liberation Sans" fill="#c22" text-anchor="middle">321</text>`,
      `<path d="M7 2h15l-4 20H3z" fill="#a6d2e4"/><path d="M7 2h15v3H6z" fill="#e8e8e8"/><path d="M3 22h15l2 2H4z" fill="#6c8a96"/>`,
      `<circle cx="12" cy="12" r="12" fill="#e33b2e"/><path d="M12 24a12 12 0 0 1-10.400-18L8 16z" fill="#2da44e"/><path d="M12 24a12 12 0 0 0 10.400-18H12l4 8z" fill="#fbc116"/><circle cx="12" cy="12" r="5.500" fill="#5a8dee" stroke="#fff" stroke-width="1.500"/>`,
      `<circle cx="12" cy="13" r="11" fill="#ff7139"/><path d="M12 1c4 2 8 6 9 10 1 6-3 12-9 13z" fill="#ff3a5c" opacity=".75"/><circle cx="12" cy="13" r="6" fill="#6e2fbf"/><path d="M14 0c4 3 5 6 4 10l-6-3z" fill="#ffbd1f"/>`
    ];
    const cell = (svg, i) => `<span class="cell${i === 11 ? ' hi' : ''}${i >= 11 ? ' run' : ''}"><svg width="24" height="26" viewBox="0 0 24 26" style="overflow:visible">${svg}</svg></span>`;
    this.shadowRoot.innerHTML = `
      <style>
        :host { display: flex; height: 40px; flex: none; align-items: stretch; background: linear-gradient(90deg, #3a3934 0, #4b4438 18%, #47342f 38%, #39303a 72%, #2b2b3b 86%, #2a2a3a 100%); color: #fff; font: 12px Roboto, sans-serif; }
        .apps { display: flex; margin-left: -1px; }
        .cell { width: 49px; display: flex; align-items: center; justify-content: center; flex: none; }
        .cell.hi { background: rgba(255,255,255,.16); }
        .cell.run { box-shadow: inset 0 -2px 0 #b9a98d; }
        .tray { margin-left: auto; display: flex; align-items: center; }
        .ime { margin-right: 15px; position: relative; top: -2px; }
        .tray svg { flex: none; }
        .clock { text-align: center; line-height: 17px; width: 84px; margin-left: -2px; }
        .edge { width: 1px; align-self: stretch; background: #77778a; margin-left: 20px; margin-right: 4px; }
      </style>
      <div class="apps">${icons.map(cell).join('')}</div>
      <div class="tray">
        <span class="ime">EN</span>
        <svg width="14" height="8" viewBox="0 0 14 8" style="margin-right:8px"><path d="M1 7l6-6 6 6" fill="none" stroke="#fff" stroke-width="1.300"/></svg>
        <svg width="18" height="14" viewBox="0 0 18 14" style="margin-right:6px"><path d="M1 4h15v8H1z" fill="#9d9d9d"/><path d="M3 1h12v3H3z" fill="#d4d4d4"/><path d="M6 9l3 4 7-9" fill="none" stroke="#4ec43c" stroke-width="2.500"/></svg>
        <svg width="17" height="14" viewBox="0 0 17 14" style="margin-right:9px"><path d="M1 5h3l4-4v12L4 9H1z" fill="none" stroke="#fff"/><path d="M10.500 4.500c1 1.500 1 3.500 0 5M13 3c1.500 2.500 1.500 5.500 0 8" fill="none" stroke="#fff"/></svg>
        <span>ENG</span>
        <div class="clock"><div>21:28</div><div>25.11.2020</div></div>
        <svg width="16" height="16" viewBox="0 0 16 16" style="margin-left:4px"><path d="M.5 1.500h15v11h-5l-2.500 2.500-2.500-2.500h-5z" fill="none" stroke="#fff"/></svg>
        <span class="edge"></span>
      </div>`;
  }
}

customElements.define('fav-icon', FavIcon);
customElements.define('browser-tab', BrowserTab);
customElements.define('browser-tabs', BrowserTabs);
customElements.define('browser-toolbar', BrowserToolbar);
customElements.define('bookmark-bar', BookmarkBar);
customElements.define('page-viewport', PageViewport);
customElements.define('site-header', SiteHeader);
customElements.define('bread-crumbs', BreadCrumbs);
customElements.define('page-title', PageTitle);
customElements.define('two-columns', TwoColumns);
customElements.define('info-dot', InfoDot);
customElements.define('rt-button', RtButton);
customElements.define('general-card', GeneralCard);
customElements.define('pack-ring', PackRing);
customElements.define('mobile-card', MobileCard);
customElements.define('options-section', OptionsSection);
customElements.define('promo-box', PromoBox);
customElements.define('task-bar', TaskBar);
</script>
</body>
</html>
